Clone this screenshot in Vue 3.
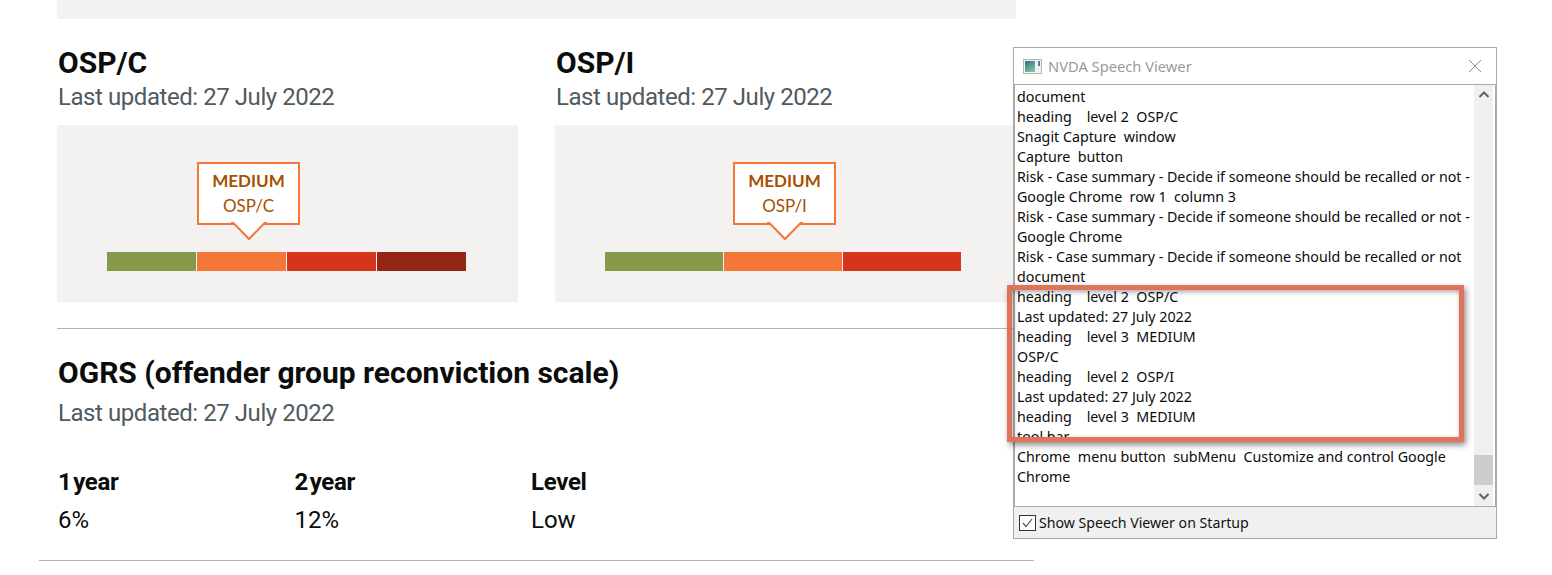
<template>
  <div class="page">
    <div class="top-block"></div>

    <div class="scores">
      <section v-for="score in scores" :key="score.name" class="score">
        <h2>{{ score.name }}</h2>
        <p class="updated">Last updated: 27 July 2022</p>
        <div class="panel">
          <div class="callout" :style="{ marginLeft: score.pointer + 'px' }">
            <h3>MEDIUM</h3>
            <span>{{ score.name }}</span>
            <svg class="callout-arrow" width="40" height="20" viewBox="0 0 40 20">
              <path d="M4 0 L20 16.5 L36 0 Z" fill="#fff" />
              <path d="M2 1 L4.5 1 L20 17 L35.5 1 L38 1" fill="none" stroke="#f47738" stroke-width="2" />
            </svg>
          </div>
          <div class="bar" :style="{ width: score.barWidth + 'px' }">
            <div v-for="seg in score.segments" :key="seg" class="seg" :style="{ background: seg }"></div>
          </div>
        </div>
      </section>
    </div>

    <hr class="rule" />

    <section class="ogrs">
      <h2>OGRS (offender group reconviction scale)</h2>
      <p class="updated">Last updated: 27 July 2022</p>
      <div class="ogrs-table">
        <div v-for="col in ogrs" :key="col.label" class="ogrs-col">
          <strong>{{ col.label }}</strong>
          <span>{{ col.value }}</span>
        </div>
      </div>
    </section>

    <hr class="rule rule-wide" />

    <div class="viewer">
      <div class="viewer-title">
        <svg class="viewer-icon" width="19" height="15" viewBox="0 0 19 15">
          <defs>
            <linearGradient id="nvda-icon" x1="0" y1="0" x2="0.6" y2="1">
              <stop offset="0" stop-color="#2f6f8a" />
              <stop offset="1" stop-color="#7fbf9a" />
            </linearGradient>
          </defs>
          <rect x="0.5" y="0.5" width="18" height="14" fill="#f2f4f4" stroke="#b4b8b8" />
          <rect x="2" y="2" width="10" height="11" fill="url(#nvda-icon)" />
          <rect x="15" y="2" width="2" height="5" fill="#5f7d80" />
        </svg>
        <span>NVDA Speech Viewer</span>
        <svg class="viewer-close" width="14" height="14" viewBox="0 0 14 14">
          <path d="M1 1 L13 13 M13 1 L1 13" stroke="#8c8c8c" stroke-width="1" fill="none" />
        </svg>
      </div>
      <div class="viewer-body">
        <div class="viewer-log">
          <div v-for="(line, i) in lines" :key="i" class="log-line">{{ line }}</div>
        </div>
        <div class="scrollbar">
          <svg width="20" height="20" viewBox="0 0 20 20">
            <path d="M5.5 12 L10 7.5 L14.5 12" fill="none" stroke="#606060" stroke-width="2" />
          </svg>
          <div class="scroll-track"></div>
          <div class="scroll-thumb"></div>
          <svg width="20" height="20" viewBox="0 0 20 20">
            <path d="M5.5 8 L10 12.5 L14.5 8" fill="none" stroke="#606060" stroke-width="2" />
          </svg>
        </div>
      </div>
      <label class="viewer-foot">
        <span class="checkbox">
          <svg width="15" height="14" viewBox="0 0 15 14">
            <path d="M3 7 L6 10.5 L12 3" fill="none" stroke="#555" stroke-width="1.2" />
          </svg>
        </span>
        Show Speech Viewer on Startup
      </label>
      <div class="highlight"></div>
    </div>
  </div>
</template>

<script setup>
const green = '#85994b'
const orange = '#f47738'
const red = '#d4351c'
const darkRed = '#942514'

const scores = [
  { name: 'OSP/C', pointer: 90, barWidth: 359, segments: [green, orange, red, darkRed] },
  { name: 'OSP/I', pointer: 128, barWidth: 356, segments: [green, orange, red] }
]

const ogrs = [
  { label: '1 year', value: '6%' },
  { label: '2 year', value: '12%' },
  { label: 'Level', value: 'Low' }
]

const lines = [
  'document',
  'heading    level 2  OSP/C',
  'Snagit Capture  window',
  'Capture  button',
  'Risk - Case summary - Decide if someone should be recalled or not -',
  'Google Chrome  row 1  column 3',
  'Risk - Case summary - Decide if someone should be recalled or not -',
  'Google Chrome',
  'Risk - Case summary - Decide if someone should be recalled or not',
  'document',
  'heading    level 2  OSP/C',
  'Last updated: 27 July 2022',
  'heading    level 3  MEDIUM',
  'OSP/C',
  'heading    level 2  OSP/I',
  'Last updated: 27 July 2022',
  'heading    level 3  MEDIUM',
  'tool bar',
  'Chrome  menu button  subMenu  Customize and control Google',
  'Chrome'
]
</script>

<style>
html, body {
  background: #fff;
}
</style>

<style scoped>
.page {
  position: relative;
  width: 1552px;
  height: 575px;
  overflow: hidden;
  padding-left: 57px;
  box-sizing: border-box;
  font-family: Roboto, "Liberation Sans", sans-serif;
  color: #0b0c0c;
}
.top-block {
  width: 959px;
  height: 19px;
  background: #f3f2f1;
}
.scores {
  display: flex;
  gap: 37px;
  width: 959px;
  padding-top: 26px;
}
.score {
  width: 461px;
}
h2 {
  margin: 0;
  padding-left: 1px;
  font-size: 30px;
  line-height: 36px;
  font-weight: 700;
}
.updated {
  margin: 0;
  padding-left: 1px;
  font-size: 24px;
  line-height: 32px;
  letter-spacing: -0.44px;
  color: #505a5f;
}
.panel {
  margin-top: 12px;
  height: 177px;
  padding: 37px 50px 0;
  box-sizing: border-box;
  background: #f3f2f1;
}
.callout {
  position: relative;
  width: 103px;
  height: 63px;
  box-sizing: border-box;
  border: 2px solid #f47738;
  background: #fff;
  text-align: center;
  font-family: Lato, sans-serif;
  color: #a85000;
  font-size: 17px;
}
.callout h3 {
  margin: 5px 0 0;
  font-size: 17px;
  line-height: 24px;
  font-weight: 700;
}
.callout span {
  display: block;
  line-height: 26px;
}
.callout-arrow {
  position: absolute;
  left: 30px;
  top: 58px;
}
.bar {
  display: flex;
  gap: 1px;
  margin-top: 27px;
}
.seg {
  flex: 1;
  height: 19px;
}
.rule {
  margin: 26px 0 0;
  width: 959px;
  height: 1px;
  border: 0;
  background: #b1b4b6;
}
.ogrs {
  padding-top: 26px;
}
.ogrs .updated {
  margin-top: 6px;
}
.ogrs-table {
  display: flex;
  margin-top: 34px;
  padding-left: 1px;
}
.ogrs-col {
  display: flex;
  flex-direction: column;
  width: 236.5px;
  font-size: 24px;
  line-height: 38px;
}
.ogrs-col strong {
  word-spacing: -4px;
  letter-spacing: -0.3px;
}
.rule-wide {
  margin: 21px 0 0 -18px;
  width: 995px;
}

.viewer {
  position: absolute;
  left: 1013px;
  top: 47px;
  width: 484px;
  height: 492px;
  box-sizing: border-box;
  border: 1px solid #a9a9a9;
  background: #fff;
  display: flex;
  flex-direction: column;
  font-family: "Noto Sans", "Open Sans", sans-serif;
  color: #0b0b0b;
}
.viewer-title {
  display: flex;
  align-items: center;
  height: 37px;
  padding: 0 14px 0 9px;
  flex-shrink: 0;
  font-size: 14.7px;
  color: #9a9a9a;
  border-bottom: 1px solid #a9a9a9;
  box-sizing: border-box;
}
.viewer-icon {
  margin-right: 6px;
}
.viewer-close {
  margin-left: auto;
}
.viewer-body {
  flex: 1;
  display: flex;
  min-height: 0;
  border-left: 1px solid #a9a9a9;
  border-right: 1px solid #a9a9a9;
  border-bottom: 1px solid #a9a9a9;
  margin: 0;
  padding-right: 2px;
}
.viewer-log {
  flex: 1;
  padding: 2px 0 0 2px;
  overflow: hidden;
}
.log-line {
  height: 20px;
  line-height: 20px;
  font-size: 14.25px;
  white-space: pre;
}
.scrollbar {
  width: 19px;
  display: flex;
  flex-direction: column;
  background: #f0f0f0;
}
.scrollbar svg {
  display: block;
  flex-shrink: 0;
}
.scroll-track {
  flex: 1;
}
.scroll-thumb {
  height: 30px;
  margin-bottom: 1px;
  background: #cdcdcd;
}
.viewer-foot {
  display: flex;
  align-items: center;
  gap: 3px;
  height: 31px;
  flex-shrink: 0;
  padding-left: 5px;
  font-size: 14.15px;
  background: #f0f0f0;
  color: #111;
}
.checkbox {
  display: flex;
  align-items: center;
  justify-content: center;
  width: 15px;
  height: 14px;
  border: 1px solid #333;
  background: #fff;
}
.highlight {
  position: absolute;
  left: -7px;
  top: 237px;
  width: 457px;
  height: 157px;
  box-sizing: border-box;
  border: 5px solid #e0735c;
  box-shadow: 2px 3px 6px rgba(0, 0, 0, 0.45), inset 1px 2px 5px rgba(0, 0, 0, 0.35);
}
</style>
